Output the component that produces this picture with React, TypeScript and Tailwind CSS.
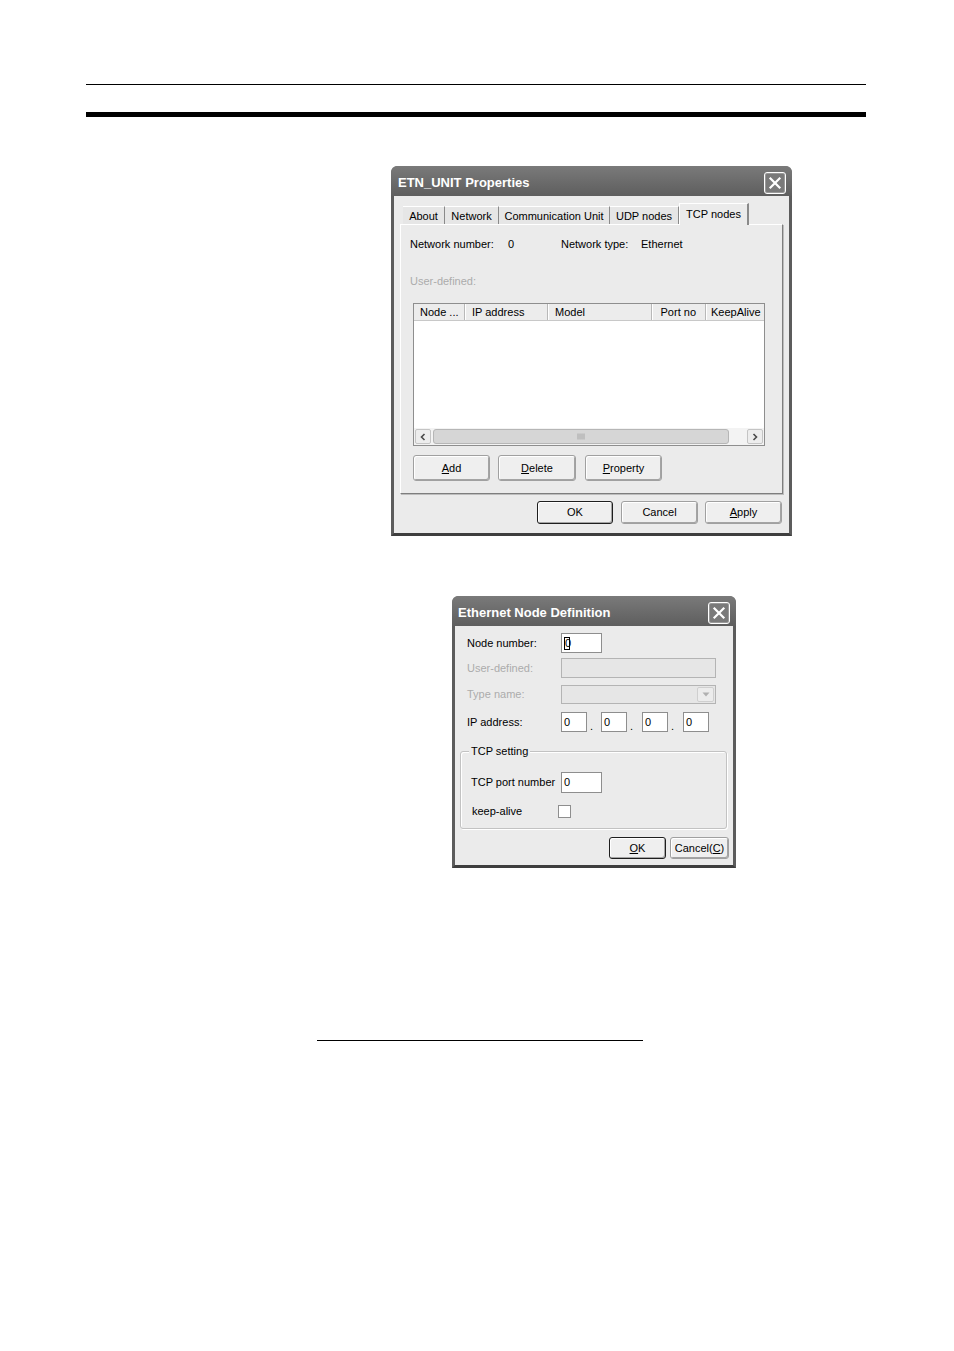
import React from "react";

const font = { fontFamily: '"Liberation Sans", Arial, sans-serif' };

function CloseBtn() {
  return (
    <div className="w-[22px] h-[22px] rounded-[3px] border border-white bg-[#7a7a7a] flex items-center justify-center shadow-[inset_0_0_0_1px_#9a9a9a]">
      <svg width="14" height="14" viewBox="0 0 14 14">
        <path d="M2.5 2.5 L11.5 11.5 M11.5 2.5 L2.5 11.5" stroke="#ffffff" strokeWidth="2.2" strokeLinecap="square" />
      </svg>
    </div>
  );
}

function Btn({ w, h, children, def }: { w: string; h: string; children: React.ReactNode; def?: boolean }) {
  return (
    <div
      className={`${w} ${h} flex items-center justify-center rounded-[3px] bg-[#efefef] text-[11px] leading-[13px] text-black border ${
        def ? "border-[#1e1e1e]" : "border-[#a0a0a0]"
      } shadow-[inset_1px_1px_0_#ffffff,inset_-1px_-1px_0_#a4a4a4]`}
    >
      {children}
    </div>
  );
}

function Arrow({ dir }: { dir: "l" | "r" }) {
  return (
    <div className="w-[16px] h-[15px] rounded-[2px] bg-[#ededed] border border-[#c4c4c4] flex items-center justify-center">
      <svg width="8" height="8" viewBox="0 0 8 8">
        <path
          d={dir === "l" ? "M5.5 1 L2.5 4 L5.5 7" : "M2.5 1 L5.5 4 L2.5 7"}
          stroke="#4a4a4a"
          strokeWidth="1.6"
          fill="none"
        />
      </svg>
    </div>
  );
}

function Tab({ w, label, sel }: { w: string; label: string; sel?: boolean }) {
  if (sel) {
    return (
      <div
        className={`${w} h-[22px] -mb-px relative z-10 bg-[#ebebeb] border-t border-l border-white border-r-2 border-r-[#8a8a8a] flex items-start justify-center pt-[4px] text-[11px] leading-[13px]`}
      >
        {label}
      </div>
    );
  }
  return (
    <div
      className={`${w} h-[18px] bg-[#e6e6e6] border-t border-white border-r border-r-[#8a8a8a] flex items-start justify-center pt-[3px] text-[11px] leading-[13px]`}
    >
      {label}
    </div>
  );
}

function Field({ w, h = "h-[20px]", children, disabled }: { w: string; h?: string; children?: React.ReactNode; disabled?: boolean }) {
  return (
    <div
      className={`${w} ${h} border border-[#8e8e8e] ${disabled ? "bg-[#e6e6e6] border-[#b4b4b4]" : "bg-white"} flex items-center pl-[2px] text-[11px] leading-[13px]`}
    >
      {children}
    </div>
  );
}

function Dialog1() {
  return (
    <div className="ml-[391px] mt-[49px] w-[401px] h-[370px] border-[3px] border-[#5c5c5c] border-b-[#3e3e3e] rounded-t-[7px] bg-[#ebebeb] flex flex-col">
      <div className="h-[27px] -mx-[3px] -mt-[3px] pt-[3px] px-[6px] h-[30px] rounded-t-[6px] bg-gradient-to-b from-[#7a7a7a] to-[#5e5e5e] flex items-center justify-between">
        <span className="text-white font-bold text-[13px] leading-[15px] ml-[1px]">ETN_UNIT Properties</span>
        <CloseBtn />
      </div>
      <div className="flex-1 flex flex-col pt-[7px] px-[6px]">
        <div className="h-[21px] flex items-end pl-[3px]">
          <Tab w="w-[42px]" label="About" />
          <Tab w="w-[54px]" label="Network" />
          <Tab w="w-[111px]" label="Communication Unit" />
          <Tab w="w-[69px]" label="UDP nodes" />
          <Tab w="w-[70px]" label="TCP nodes" sel />
        </div>
        <div className="h-[270px] border-t border-l border-white border-r border-b border-r-[#7e7e7e] border-b-[#7e7e7e] shadow-[1px_1px_0_#bdbdbd] bg-[#ebebeb] pl-[9px] pt-[13px] flex flex-col">
          <div className="flex text-[11px] leading-[13px]">
            <span className="w-[98px]">Network number:</span>
            <span className="w-[53px]">0</span>
            <span className="w-[80px]">Network type:</span>
            <span>Ethernet</span>
          </div>
          <div className="mt-[24px] text-[11px] leading-[13px] text-[#ababab]">User-defined:</div>
          <div className="mt-[15px] ml-[3px] w-[352px] h-[143px] border border-[#8e8e8e] bg-white flex flex-col">
            <div className="h-[17px] bg-[#ececec] border-b border-[#c8c8c8] flex text-[11px] leading-[13px] overflow-hidden">
              <div className="w-[51px] shrink-0 pl-[6px] pt-[2px] border-r border-[#b8b8b8] shadow-[1px_0_0_#ffffff]">Node ...</div>
              <div className="w-[83px] shrink-0 pl-[7px] pt-[2px] border-r border-[#b8b8b8] shadow-[1px_0_0_#ffffff]">IP address</div>
              <div className="w-[104px] shrink-0 pl-[7px] pt-[2px] border-r border-[#b8b8b8] shadow-[1px_0_0_#ffffff]">Model</div>
              <div className="w-[54px] shrink-0 pr-[9px] pt-[2px] text-right border-r border-[#b8b8b8] shadow-[1px_0_0_#ffffff]">Port no</div>
              <div className="w-[56px] shrink-0 pl-[5px] pt-[2px] whitespace-nowrap overflow-hidden">KeepAlive</div>
            </div>
            <div className="flex-1" />
            <div className="h-[17px] bg-[#f3f3f3] flex items-center px-px gap-[2px]">
              <Arrow dir="l" />
              <div className="w-[296px] h-[15px] rounded-[3px] bg-[#d6d6d6] border border-[#b6b6b6] flex items-center justify-center">
                <svg width="9" height="7" viewBox="0 0 9 7">
                  <path d="M1 0.5 V6.5 M3 0.5 V6.5 M5 0.5 V6.5 M7 0.5 V6.5" stroke="#a8a8a8" strokeWidth="1" />
                </svg>
              </div>
              <div className="flex-1" />
              <Arrow dir="r" />
            </div>
          </div>
          <div className="mt-[9px] ml-[3px] flex">
            <Btn w="w-[77px]" h="h-[26px]">
              <span><u>A</u>dd</span>
            </Btn>
            <div className="w-[8px]" />
            <Btn w="w-[78px]" h="h-[26px]">
              <span><u>D</u>elete</span>
            </Btn>
            <div className="w-[9px]" />
            <Btn w="w-[77px]" h="h-[26px]">
              <span><u>P</u>roperty</span>
            </Btn>
          </div>
        </div>
        <div className="mt-[7px] flex justify-end pr-[1px]">
          <Btn w="w-[76px]" h="h-[23px]" def>
            <span>OK</span>
          </Btn>
          <div className="w-[8px]" />
          <Btn w="w-[77px]" h="h-[23px]">
            <span>Cancel</span>
          </Btn>
          <div className="w-[7px]" />
          <Btn w="w-[77px]" h="h-[23px]">
            <span><u>A</u>pply</span>
          </Btn>
        </div>
      </div>
    </div>
  );
}

function Dialog2() {
  const label = "w-[94px] text-[11px] leading-[13px]";
  return (
    <div className="ml-[452px] mt-[60px] w-[284px] h-[272px] border-[3px] border-[#5c5c5c] border-b-[#3e3e3e] rounded-t-[7px] bg-[#ebebeb] flex flex-col">
      <div className="-mx-[3px] -mt-[3px] pt-[3px] px-[6px] h-[30px] rounded-t-[6px] bg-gradient-to-b from-[#7a7a7a] to-[#5e5e5e] flex items-center justify-between">
        <span className="text-white font-bold text-[13px] leading-[15px]">Ethernet Node Definition</span>
        <CloseBtn />
      </div>
      <div className="flex-1 flex flex-col pl-[12px] pt-[7px]">
        <div className="flex items-center h-[20px]">
          <span className={label}>Node number:</span>
          <Field w="w-[41px]">
            <span className="inline-block border border-black h-[13px] w-[6px] leading-[11px] text-[11px]">0</span>
          </Field>
        </div>
        <div className="flex items-center h-[20px] mt-[5px]">
          <span className={`${label} text-[#ababab]`}>User-defined:</span>
          <Field w="w-[155px]" disabled />
        </div>
        <div className="flex items-center h-[20px] mt-[6px]">
          <span className={`${label} text-[#ababab]`}>Type name:</span>
          <div className="w-[155px] h-[19px] border border-[#b4b4b4] bg-[#e6e6e6] flex justify-end items-center pr-px">
            <div className="w-[17px] h-[15px] rounded-[2px] bg-[#ececec] border border-[#cfcfcf] flex items-center justify-center">
              <svg width="8" height="5" viewBox="0 0 8 5">
                <path d="M0.5 0.5 L4 4.5 L7.5 0.5 Z" fill="#b0b0b0" />
              </svg>
            </div>
          </div>
        </div>
        <div className="flex items-center h-[20px] mt-[8px]">
          <span className={label}>IP address:</span>
          <Field w="w-[26px]">0</Field>
          <span className="w-[14px] text-[11px] leading-[13px] pl-[3px] pt-[8px]">.</span>
          <Field w="w-[26px]">0</Field>
          <span className="w-[15px] text-[11px] leading-[13px] pl-[3px] pt-[8px]">.</span>
          <Field w="w-[26px]">0</Field>
          <span className="w-[15px] text-[11px] leading-[13px] pl-[3px] pt-[8px]">.</span>
          <Field w="w-[26px]">0</Field>
        </div>
        <div className="relative mt-[19px] -ml-[7px] w-[267px] h-[78px] border border-[#c2c2c2] rounded-[3px] shadow-[inset_1px_1px_0_#ffffff,1px_1px_0_#ffffff] pt-[20px] pl-[10px] flex flex-col">
          <span className="absolute -top-[7px] left-[8px] bg-[#ebebeb] px-[2px] text-[11px] leading-[13px]">TCP setting</span>
          <div className="flex items-center h-[21px]">
            <span className="w-[90px] text-[11px] leading-[13px]">TCP port number</span>
            <Field w="w-[41px]" h="h-[21px]">0</Field>
          </div>
          <div className="flex items-center h-[13px] mt-[12px]">
            <span className="w-[87px] pl-[1px] text-[11px] leading-[13px]">keep-alive</span>
            <div className="w-[13px] h-[13px] border border-[#8e8e8e] bg-white" />
          </div>
        </div>
        <div className="mt-[8px] flex justify-end pr-[4px]">
          <Btn w="w-[57px]" h="h-[22px]" def>
            <span><u>O</u>K</span>
          </Btn>
          <div className="w-[4px]" />
          <Btn w="w-[59px]" h="h-[22px]">
            <span>Cancel(<u>C</u>)</span>
          </Btn>
        </div>
      </div>
    </div>
  );
}

export default function App() {
  return (
    <div className="w-[954px] h-[1351px] bg-white text-black overflow-hidden" style={font}>
      <div className="pt-[84px] flex flex-col">
        <div className="ml-[86px] w-[780px] h-px bg-black" />
        <div className="ml-[86px] w-[780px] h-[5px] bg-black mt-[27px]" />
        <Dialog1 />
        <Dialog2 />
        <div className="ml-[317px] mt-[172px] w-[326px] h-px bg-black" />
      </div>
    </div>
  );
}
